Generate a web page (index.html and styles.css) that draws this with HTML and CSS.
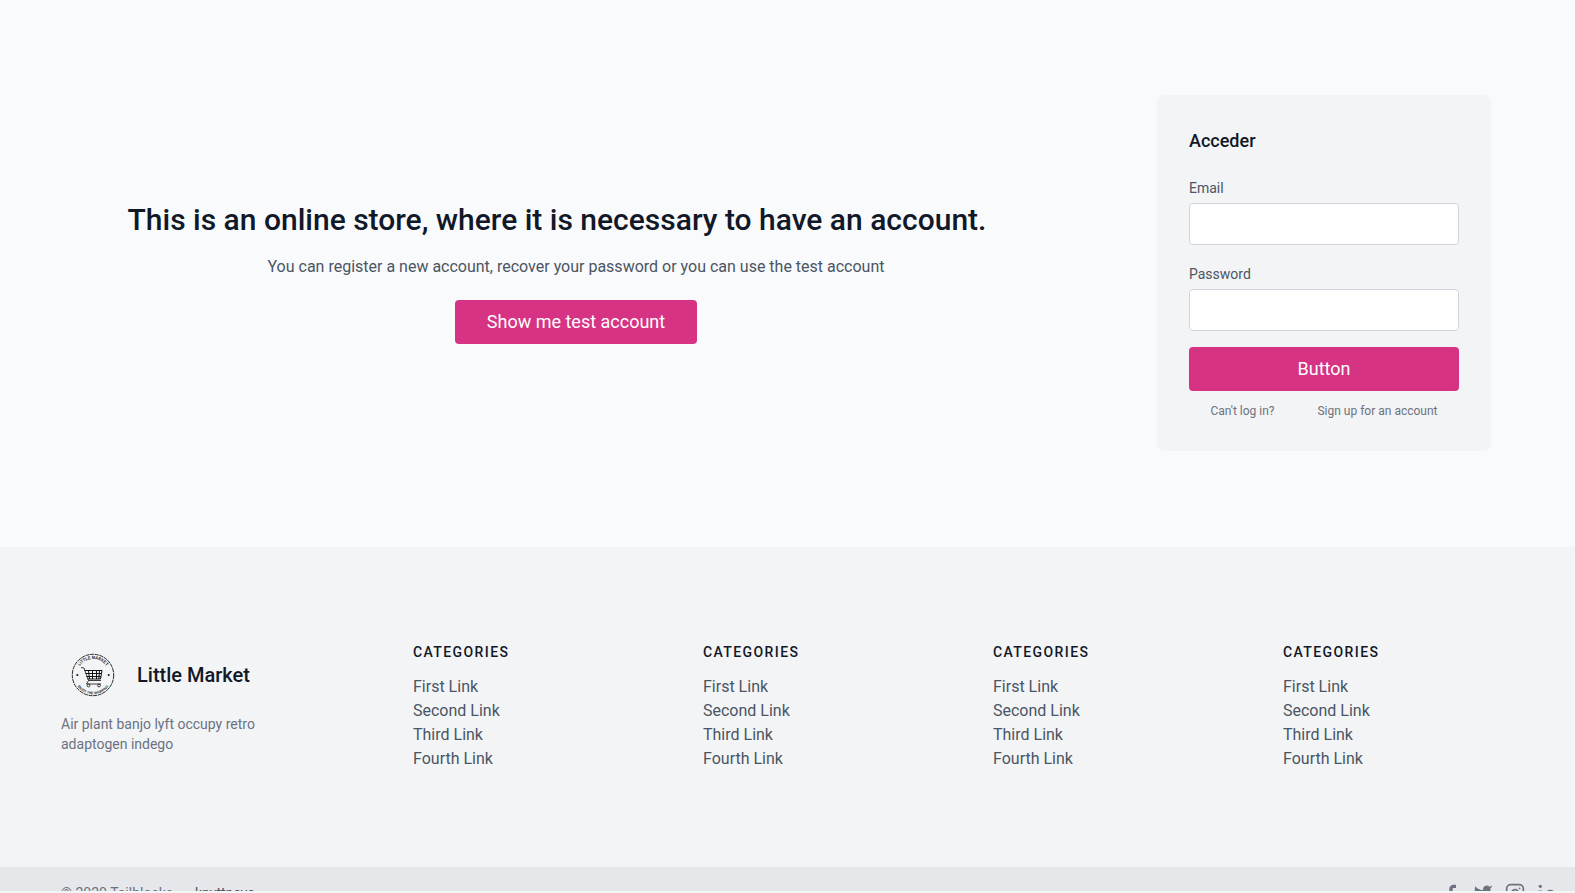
FILE: index.html
```html
<!DOCTYPE html>
<html lang="en">
<head>
<meta charset="utf-8">
<title>Little Market</title>
<link rel="stylesheet" href="styles.css">
</head>
<body>
<section class="hero">
  <div class="intro">
    <h1 class="intro-title">This is an online store, where it is necessary to have an account.</h1>
    <p class="intro-text">You can register a new account, recover your password or you can use the test account</p>
    <button class="btn intro-btn">Show me test account</button>
  </div>
  <form class="card">
    <h2 class="card-title">Acceder</h2>
    <div class="field"><label for="email">Email</label><input id="email" type="email"></div>
    <div class="field"><label for="password">Password</label><input id="password" type="password"></div>
    <button class="btn" type="button">Button</button>
    <div class="card-links"><a>Can't log in?</a><a>Sign up for an account</a></div>
  </form>
</section>
<footer class="footer">
  <div class="footer-main">
    <div class="brand">
      <div class="brand-row">
        <svg class="logo" viewBox="0 0 64 64" fill="none" stroke="#111">
          <defs>
            <path id="arc-top" d="M16 32a16 16 0 0 1 32 0"/>
            <path id="arc-bottom" d="M12.700 32a19.300 19.300 0 0 0 38.600 0"/>
          </defs>
          <circle cx="32" cy="32" r="20.700" stroke-width=".9" stroke-dasharray="4 .7"/>
          <text class="logo-text"><textPath href="#arc-top" startOffset="50%" textLength="31" lengthAdjust="spacingAndGlyphs">LITTLE MARKET</textPath></text>
          <text class="logo-text logo-text-small"><textPath href="#arc-bottom" startOffset="50%" textLength="36" lengthAdjust="spacingAndGlyphs">ENJOY THE SHOPPING</textPath></text>
          <circle cx="16.300" cy="32" r="1" fill="#111" stroke="none"/>
          <circle cx="47.700" cy="32" r="1" fill="#111" stroke="none"/>
          <path d="M20 24.500l3 .5 4.500 12.500h12.500M27.500 37.500l-2 3.500h14.500" stroke-width=".8"/>
          <path d="M23.500 27.500h17.500l-1.500 8.500h-13M24.500 30.500h16M25.500 33.500h14.500M27.500 27.500l1 8.500M31.500 27.500v8.500M35.500 27.500v8.500M38.500 27.500l-.7 8.500" stroke-width="1"/>
          <circle cx="27.500" cy="42.500" r="1.400" stroke-width=".8"/>
          <circle cx="38" cy="42.500" r="1.400" stroke-width=".8"/>
        </svg>
        <span class="brand-name">Little Market</span>
      </div>
      <p class="brand-text">Air plant banjo lyft occupy retro adaptogen indego</p>
    </div>
    <div class="columns">
      <nav class="column"><h2>CATEGORIES</h2><a>First Link</a><a>Second Link</a><a>Third Link</a><a>Fourth Link</a></nav>
      <nav class="column"><h2>CATEGORIES</h2><a>First Link</a><a>Second Link</a><a>Third Link</a><a>Fourth Link</a></nav>
      <nav class="column"><h2>CATEGORIES</h2><a>First Link</a><a>Second Link</a><a>Third Link</a><a>Fourth Link</a></nav>
      <nav class="column"><h2>CATEGORIES</h2><a>First Link</a><a>Second Link</a><a>Third Link</a><a>Fourth Link</a></nav>
    </div>
  </div>
  <div class="bar">
    <p class="copyright">© 2020 Tailblocks — <a class="author">knyttneve</a></p>
    <div class="social">
      <svg viewBox="0 0 24 24" fill="currentColor"><path d="M18 2h-3a5 5 0 00-5 5v3H7v4h3v8h4v-8h3l1-4h-4V7a1 1 0 011-1h3z"/></svg>
      <svg viewBox="0 0 24 24" fill="currentColor"><path d="M23 3a10.900 10.900 0 01-3.140 1.530 4.480 4.480 0 00-7.860 3v1A10.660 10.660 0 013 4s-4 9 5 13a11.640 11.640 0 01-7 2c9 5 20 0 20-11.500a4.500 4.500 0 00-.08-.83A7.720 7.720 0 0023 3z"/></svg>
      <svg viewBox="0 0 24 24" fill="none" stroke="currentColor" stroke-width="2" stroke-linecap="round" stroke-linejoin="round"><rect width="20" height="20" x="2" y="2" rx="5"/><path d="M16 11.370A4 4 0 1112.630 8 4 4 0 0116 11.370zm1.500-4.870h.01"/></svg>
      <svg viewBox="0 0 24 24" fill="currentColor"><path d="M16 8a6 6 0 016 6v7h-4v-7a2 2 0 00-4 0v7h-4v-7a6 6 0 016-6zM2 9h4v12H2z"/><circle cx="4" cy="4" r="2"/></svg>
    </div>
  </div>
</footer>
<div class="edge"></div>
</body>
</html>
```
FILE: styles.css
```css
* { box-sizing: border-box; margin: 0; padding: 0; }
body {
  display: flex;
  flex-direction: column;
  height: 893px;
  overflow: hidden;
  background: #f9fafc;
  color: #4b5563;
  font: 400 16px/24px Roboto, sans-serif;
}
.hero { display: flex; align-items: flex-start; height: 547px; flex: none; padding: 95px 84px 0 0; }
.intro { flex: 1; display: flex; flex-direction: column; align-items: center; padding: 107px 5px 0 0; }
.intro-title {
  margin: 0 38px 17px 0;
  color: #111827;
  font-size: 30px;
  font-weight: 500;
  line-height: 36px;
  white-space: nowrap;
}
.intro-text { margin-bottom: 21px; }
.btn {
  height: 44px;
  border: 0;
  border-radius: 4px;
  background: #d63384;
  color: #fff;
  font: 400 18px/28px Roboto, sans-serif;
}
.intro-btn { width: 242px; }
.card {
  display: flex;
  flex-direction: column;
  width: 334px;
  height: 356px;
  padding: 32px;
  border-radius: 8px;
  background: #f3f4f6;
}
.card-title { margin-bottom: 20px; color: #111827; font-size: 18px; font-weight: 500; line-height: 28px; }
.field { display: flex; flex-direction: column; margin-bottom: 16px; }
.field label { padding-bottom: 2px; font-size: 14px; line-height: 26px; }
.field input { height: 42px; border: 1px solid #d1d5db; border-radius: 4px; background: #fff; }
.card-links { display: flex; justify-content: space-around; margin-top: 12px; color: #6b7280; font-size: 12px; line-height: 16px; }
.footer { flex: none; height: 344px; overflow: hidden; background: #f3f4f6; }
.footer-main { display: flex; gap: 80px; height: 320px; padding: 95px 11px 0 61px; }
.brand { width: 256px; flex: none; padding-top: 1px; }
.brand-row { display: flex; align-items: center; gap: 12px; }
.logo { width: 64px; height: 64px; }
.logo-text { fill: #222; stroke: none; font: 700 4.6px "Liberation Sans", sans-serif; text-anchor: middle; }
.logo-text-small { font-size: 3.6px; }
.brand-name { color: #111827; font-size: 20px; font-weight: 500; line-height: 28px; }
.brand-text { width: 210px; margin-top: 7px; color: #6b7280; font-size: 14px; line-height: 20px; }
.columns { display: flex; }
.column { display: flex; flex-direction: column; width: 290px; padding: 0 16px; }
.column h2 { margin-bottom: 13px; color: #111827; font-size: 14px; font-weight: 500; line-height: 20px; letter-spacing: 1.4px; }
.bar { display: flex; justify-content: space-between; height: 60px; padding: 16px 18px 0 61px; background: #e5e7eb; color: #6b7280; }
.copyright { font-size: 14px; line-height: 20px; }
.author { margin-left: 4px; color: #4b5563; }
.social { display: flex; gap: 12px; }
.social svg { width: 20px; height: 20px; }
.edge { flex: 1; background: #f3f4f6; }
```
